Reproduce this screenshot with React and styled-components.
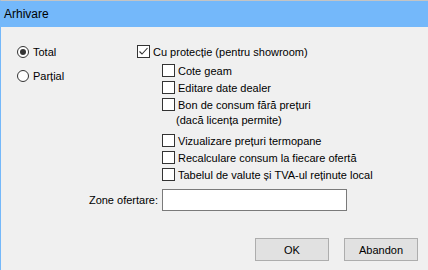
import React from "react";
import styled, { createGlobalStyle } from "styled-components";

const GlobalStyle = createGlobalStyle`
  html, body {
    margin: 0;
    padding: 0;
    background: #f0f0f0;
  }
  body {
    font-family: "Liberation Sans", Arial, sans-serif;
    font-size: 11px;
    color: #000;
  }
`;

const Window = styled.div`
  width: 428px;
  height: 270px;
  box-sizing: border-box;
  border-top: 1px solid #c4c4c4;
  border-left: 1px solid #74b8fa;
  background: #f0f0f0;
  display: flex;
  flex-direction: column;
  overflow: hidden;
`;

const TitleBar = styled.div`
  height: 26px;
  background: #74b8fa;
  display: flex;
  align-items: center;
  padding-left: 3px;
  font-size: 12px;
`;

const Body = styled.div`
  flex: 1;
  display: flex;
  flex-direction: column;
  padding: 16px 10px 0 16px;
`;

const Options = styled.div`
  display: flex;
`;

const RadioColumn = styled.div`
  width: 120px;
  display: flex;
  flex-direction: column;
  gap: 7px;
`;

const CheckColumn = styled.div`
  display: flex;
  flex-direction: column;
`;

const Row = styled.label`
  display: flex;
  align-items: center;
  height: 17px;
  gap: ${(p) => p.$gap || 2}px;
  white-space: nowrap;
`;

const SubList = styled.div`
  display: flex;
  flex-direction: column;
  padding-left: 25px;
  margin-top: ${(p) => p.$top || 0}px;
`;

const Note = styled.div`
  height: 15px;
  line-height: 15px;
  padding-left: 14px;
  margin-bottom: 4px;
  white-space: nowrap;
`;

const RadioCircle = styled.span`
  width: 12px;
  height: 12px;
  box-sizing: border-box;
  border: 1px solid #333;
  border-radius: 50%;
  background: #fff;
  display: flex;
  align-items: center;
  justify-content: center;
  flex: none;

  &::after {
    content: "";
    width: 6px;
    height: 6px;
    border-radius: 50%;
    background: #333;
    display: ${(p) => (p.$on ? "block" : "none")};
  }
`;

const Box = styled.span`
  width: 13px;
  height: 13px;
  box-sizing: border-box;
  border: 1px solid #333;
  background: #fff;
  display: flex;
  align-items: center;
  justify-content: center;
  flex: none;
`;

const ZoneRow = styled.div`
  display: flex;
  align-items: center;
  margin-top: 6px;
  margin-left: -15px;
  gap: 4px;
`;

const ZoneLabel = styled.span`
  width: 156px;
  text-align: right;
`;

const Input = styled.div`
  width: 185px;
  height: 22px;
  box-sizing: border-box;
  border: 1px solid #7a7a7a;
  background: #fff;
`;

const Buttons = styled.div`
  display: flex;
  justify-content: flex-end;
  gap: 15px;
  margin-top: 27px;
`;

const Button = styled.div`
  width: 74px;
  height: 23px;
  box-sizing: border-box;
  border: 1px solid #adadad;
  background: #e1e1e1;
  display: flex;
  align-items: center;
  justify-content: center;
`;

function Radio({ on, children }) {
  return (
    <Row $gap={4}>
      <RadioCircle $on={on} />
      {children}
    </Row>
  );
}

function Check({ on, children }) {
  return (
    <Row $gap={3}>
      <Box>
        {on && (
          <svg width="11" height="11" viewBox="0 0 11 11">
            <polyline
              points="1.5,5.5 4,8 9.5,2"
              fill="none"
              stroke="#333"
              strokeWidth="1.1"
            />
          </svg>
        )}
      </Box>
      {children}
    </Row>
  );
}

export default function App() {
  return (
    <Window>
      <GlobalStyle />
      <TitleBar>Arhivare</TitleBar>
      <Body>
        <Options>
          <RadioColumn>
            <Radio on>Total</Radio>
            <Radio>Parțial</Radio>
          </RadioColumn>
          <CheckColumn>
            <Check on>Cu protecție (pentru showroom)</Check>
            <SubList $top={2}>
              <Check>Cote geam</Check>
              <Check>Editare date dealer</Check>
              <Check>Bon de consum fără prețuri</Check>
              <Note>(dacă licența permite)</Note>
              <Check>Vizualizare prețuri termopane</Check>
              <Check>Recalculare consum la fiecare ofertă</Check>
              <Check>Tabelul de valute și TVA-ul reținute local</Check>
            </SubList>
          </CheckColumn>
        </Options>
        <ZoneRow>
          <ZoneLabel>Zone ofertare:</ZoneLabel>
          <Input />
        </ZoneRow>
        <Buttons>
          <Button>OK</Button>
          <Button>Abandon</Button>
        </Buttons>
      </Body>
    </Window>
  );
}
